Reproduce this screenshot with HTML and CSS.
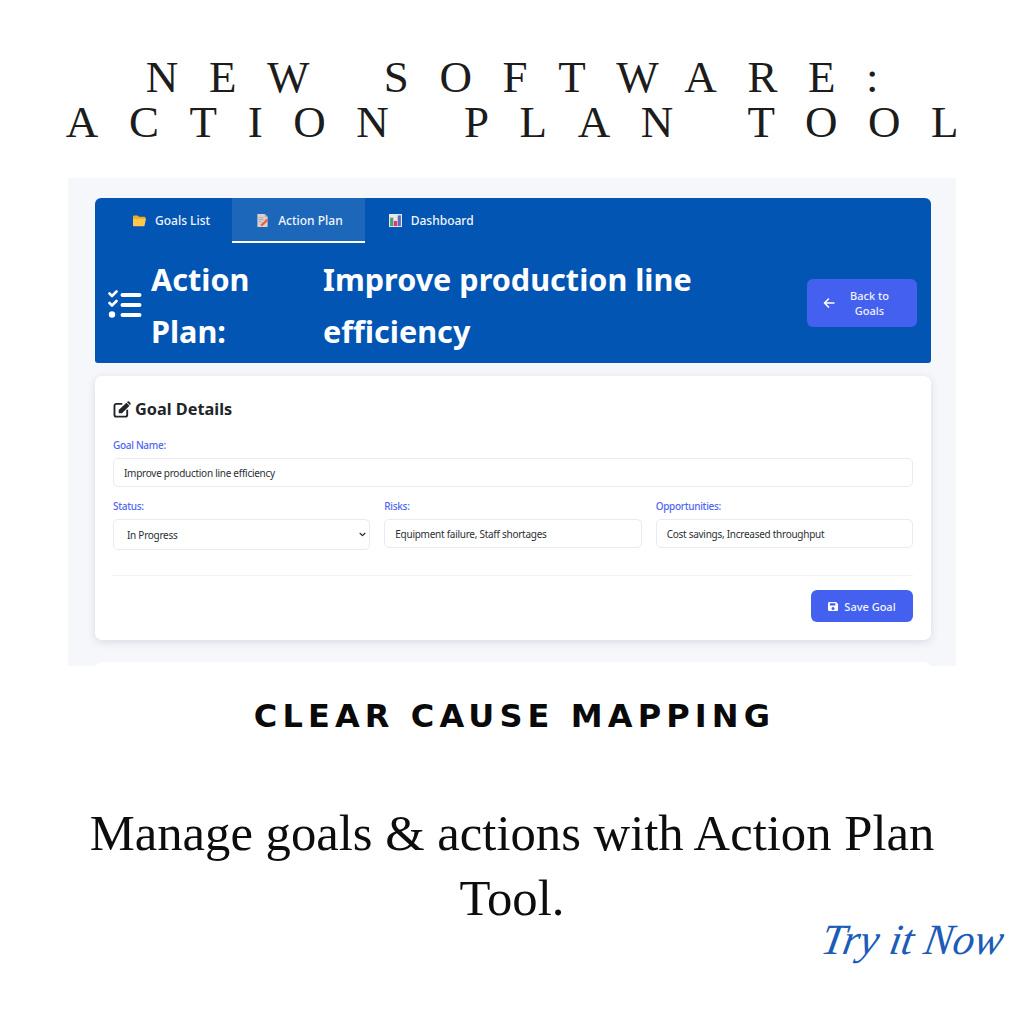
FILE: index.html
```
<!DOCTYPE html>
<html lang="en">
<head>
<meta charset="utf-8">
<title>New Software: Action Plan Tool</title>
<link rel="stylesheet" href="styles.css">
</head>
<body>
<main class="poster">
  <h1 class="headline">NEW SOFTWARE:<br>ACTION PLAN TOOL</h1>

  <section class="shot">
    <nav class="tabs">
      <a class="tab">
        <svg class="tab-icon" viewBox="0 0 14 14"><path fill="#f0a92a" d="M0 2.500c0-.6.4-1 1-1h4l1.500 1.500h6c.6 0 1 .4 1 1v2H0z"/><path fill="#fcc94d" d="M0 5h14l-1.500 7.500c-.1.400-.4.600-.8.600H1c-.6 0-1-.4-1-1z"/></svg>
        <span>Goals List</span>
      </a>
      <a class="tab tab-active">
        <svg class="tab-icon" viewBox="0 0 14 14"><path fill="#d9cfd2" d="M1.500 0h8l3 3v11h-11z"/><path fill="#a99ea6" d="M9.500 0l3 3h-3z"/><path stroke="#a99ea6" stroke-width=".8" d="M3 4h5M3 6h5M3 8h3"/><path stroke="#f0622d" stroke-width="2.400" d="M5.500 12.500l7-6.500"/></svg>
        <span>Action Plan</span>
      </a>
      <a class="tab">
        <svg class="tab-icon" viewBox="0 0 14 14"><path fill="#e4e8ea" d="M0 0h14v14H0z"/><path fill="#4f9d69" d="M1.200 4h3.400v9H1.200z"/><path fill="#e8336d" d="M5.200 7.500h3.600V13H5.200z"/><path fill="#5c6bc0" d="M9.400 1.500h3.400V13H9.400z"/></svg>
        <span>Dashboard</span>
      </a>
    </nav>

    <header class="page-head">
      <svg class="head-icon" viewBox="0 0 34 30" fill="none" stroke="#fff" stroke-linecap="round" stroke-linejoin="round">
        <path stroke-width="2.600" d="M1.500 3.500l2.500 2.500 4.500-4.500M1.500 13l2.500 2.500 4.500-4.500"/>
        <circle cx="4" cy="24.500" r="3.200" fill="#fff" stroke="none"/>
        <path stroke-width="4" d="M14.500 5h17M14.500 15h17M14.500 25h17"/>
      </svg>
      <span class="head-label">Action Plan:</span>
      <span class="head-title">Improve production line efficiency</span>
      <a class="back-btn">
        <svg class="back-arrow" viewBox="0 0 12 12" fill="none" stroke="#fff" stroke-width="1.600" stroke-linecap="round" stroke-linejoin="round"><path d="M1.500 6h9.500M5.500 2L1.500 6l4 4"/></svg>
        <span class="back-text">Back to Goals</span>
      </a>
    </header>

    <form class="card">
      <h2 class="card-title">
        <svg class="card-icon" viewBox="0 0 20 18"><path fill="none" stroke="#212529" stroke-width="2" stroke-linecap="round" d="M9 3H3.500A2 2 0 0 0 1.500 5v9.500a2 2 0 0 0 2 2H13a2 2 0 0 0 2-2V10"/><path fill="#212529" d="M6 9.500L14.200 1.800l3.200 3.200-8 8H6zM15.300.7c.5-.5 1.300-.5 1.800 0l1.300 1.300c.5.500.5 1.300 0 1.800l-.5.500-3.100-3.100z"/></svg>
        <span>Goal Details</span>
      </h2>
      <div class="field">
        <label class="field-label" for="goal">Goal Name:</label>
        <input class="control" id="goal" value="Improve production line efficiency">
      </div>
      <div class="field-row">
        <div class="field">
          <label class="field-label" for="status">Status:</label>
          <select class="control control-select" id="status"><option>In Progress</option></select>
        </div>
        <div class="field">
          <label class="field-label" for="risks">Risks:</label>
          <input class="control" id="risks" value="Equipment failure, Staff shortages">
        </div>
        <div class="field">
          <label class="field-label" for="opps">Opportunities:</label>
          <input class="control" id="opps" value="Cost savings, Increased throughput">
        </div>
      </div>
      <div class="card-actions">
        <button class="save-btn" type="button">
          <svg class="save-icon" viewBox="0 0 12 12"><path fill="#fff" fill-rule="evenodd" d="M1.500 1h7.300L11 3.200v6.300c0 .8-.7 1.500-1.500 1.500h-8C.7 11 0 10.300 0 9.500v-7C0 1.700.7 1 1.500 1zM2 2.500v2.500h6V2.500zM5.500 6.500a1.700 1.700 0 1 0 0 3.400 1.700 1.700 0 0 0 0-3.400z"/></svg>
          <span>Save Goal</span>
        </button>
      </div>
    </form>
    <div class="card card-next"></div>
  </section>

  <h2 class="subhead">CLEAR CAUSE MAPPING</h2>
  <p class="tagline">Manage goals &amp; actions with Action Plan Tool.</p>
  <p class="try-now">Try it Now</p>
</main>
</body>
</html>
```
FILE: styles.css
```
* { box-sizing: border-box; }
html, body { margin: 0; padding: 0; background: #fff; }
.poster { position: relative; width: 1024px; height: 1024px; overflow: hidden; background: #fff; display: flex; flex-direction: column; align-items: center; }
.headline { margin: 55px 0 0; padding-left: 31px; font: 400 45px/45px "Liberation Serif", serif; color: #1c1c1c; text-align: center; width: 100%; white-space: nowrap; letter-spacing: 0.68em; word-spacing: 0.06em; }
.shot { margin-top: 33px; width: 888px; height: 488px; background: #f5f7fb; padding: 20px 25px 0 27px; overflow: hidden; flex: none; font-family: "Noto Sans", sans-serif; }
.tabs { display: flex; height: 45px; padding-left: 14px; background: #0255b3; border-radius: 6px 6px 0 0; }
.tab { display: flex; align-items: center; gap: 9px; padding: 2px 22px 0 24px; color: #f2f6fc; font-size: 12px; font-weight: 500; border-bottom: 2px solid transparent; }
.tab-active { background: rgba(255,255,255,.11); border-bottom-color: #fff; }
.tab-icon { width: 13px; height: 13px; flex: none; }
.page-head { display: flex; align-items: center; height: 120px; padding: 3px 14px 0 13px; background: #0255b3; border-radius: 0 0 3px 3px; color: #fff; }
.head-icon { width: 34px; height: 30px; flex: none; margin-right: 9px; }
.head-label, .head-title { font-size: 30.600px; font-weight: 700; line-height: 52px; }
.head-label { width: 172px; flex: none; }
.head-title { width: 400px; flex: none; }
.back-btn { margin: -3px 0 0 auto; width: 110px; height: 48px; flex: none; display: flex; align-items: center; padding: 0 19px 0 16px; background: #4361ee; border-radius: 6px; color: #eef1ff; font-size: 11px; font-weight: 500; line-height: 15.500px; text-align: center; }
.back-arrow { width: 12px; height: 12px; flex: none; }
.back-text { flex: 1; padding-left: 6px; }
.card { display: block; margin-top: 13px; height: 264px; padding: 23px 18px 0; background: #fff; border-radius: 7px; box-shadow: 0 2px 8px rgba(20,30,60,.13); }
.card-next { margin-top: 22px; height: 40px; box-shadow: none; }
.card-title { display: flex; align-items: center; gap: 3px; margin: 0 0 19px; height: 20px; font-size: 16.300px; font-weight: 700; line-height: 20px; color: #212529; }
.card-icon { width: 19px; height: 17px; flex: none; }
.field { display: flex; flex-direction: column; min-width: 0; }
.field-label { font-size: 10px; font-weight: 500; letter-spacing: -0.3px; line-height: 14px; color: #4f67f0; margin-bottom: 6px; }
.control { width: 100%; height: 29px; padding: 0 10px; border: 1px solid #e9ebef; border-radius: 5px; background: #fff; font: 400 10px "Noto Sans", sans-serif; letter-spacing: -0.27px; color: #2b2f33; outline: none; }
.control-select { height: 31px; padding: 1px 0 0 13px; appearance: none; background: #fff url("data:image/svg+xml,%3Csvg xmlns='http://www.w3.org/2000/svg' viewBox='0 0 10 6'%3E%3Cpath fill='none' stroke='%23222' stroke-width='1.600' stroke-linecap='round' stroke-linejoin='round' d='M1.500 1.200L5 4.700l3.500-3.500'/%3E%3C/svg%3E") no-repeat right 3px center / 7px 5px; }
.field-row { display: grid; grid-template-columns: repeat(3, 1fr); gap: 14px; margin-top: 12px; }
.card-actions { display: flex; justify-content: flex-end; margin-top: 25px; padding-top: 14px; border-top: 1px solid #f1f2f5; }
.save-btn { display: flex; align-items: center; justify-content: center; gap: 5px; width: 102px; height: 32px; padding: 0; border: 0; border-radius: 6px; background: #4361ee; color: #f2f4ff; font: 500 11px "Noto Sans", sans-serif; }
.save-icon { width: 11px; height: 11px; flex: none; }
.subhead { margin: 32px 0 0; padding-left: 5px; font: 700 32px/36px "DejaVu Sans", sans-serif; letter-spacing: 0.16em; color: #0a0a0a; white-space: nowrap; }
.tagline { margin: 67px 0 0; width: 880px; font: 400 50.700px/65px "Liberation Serif", serif; color: #0d0d0d; text-align: center; }
.try-now { position: absolute; left: 822px; top: 910px; margin: 0; font: italic 400 43px/60px "Liberation Serif", serif; color: #1b5cb8; white-space: nowrap; transform: skewX(-10deg); }
```
